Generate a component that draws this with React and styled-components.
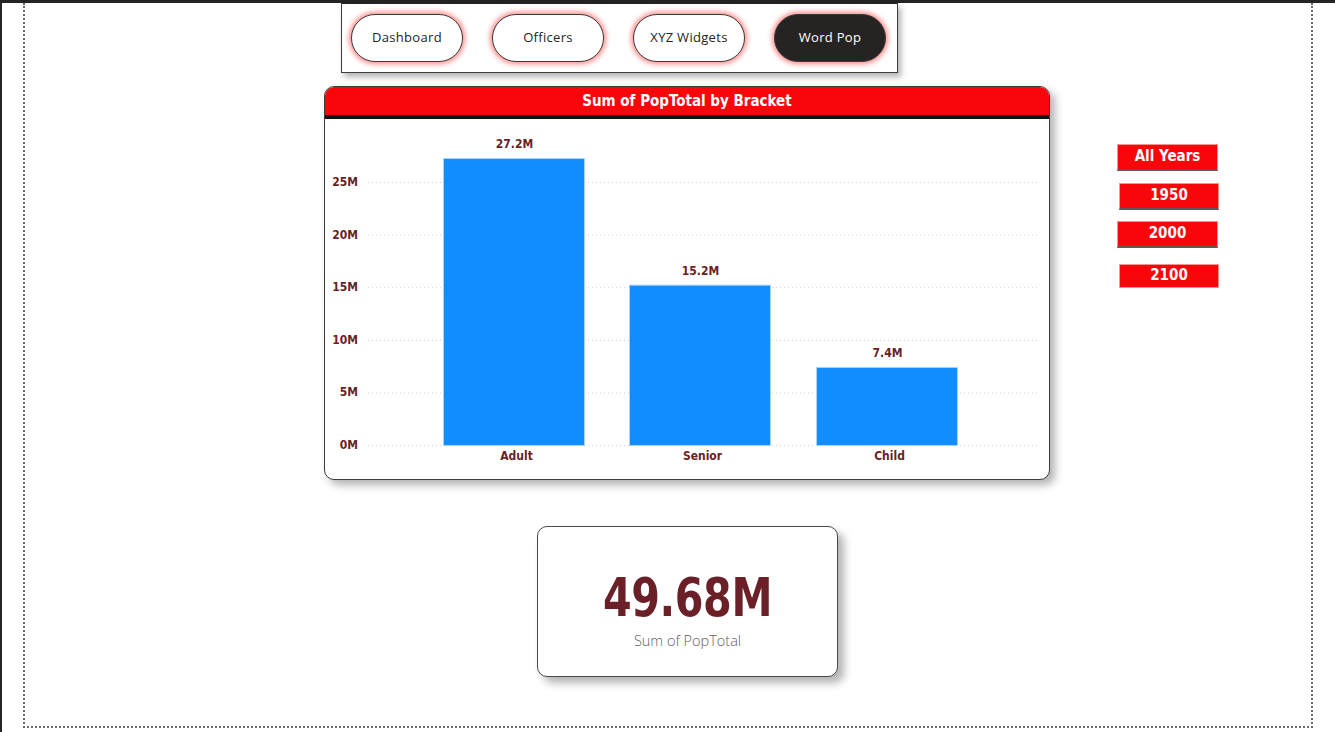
import React from "react";
import styled, { createGlobalStyle } from "styled-components";

const GlobalStyle = createGlobalStyle`
  html, body {
    margin: 0;
    padding: 0;
    background: #ffffff;
    overflow: hidden;
  }
  * { box-sizing: border-box; }
`;

const DIN = `"DejaVu Sans Condensed", "DejaVu Sans", "Liberation Sans", sans-serif`;
const MAROON = "#6B1F27";
const RED = "#F8060A";

const Frame = styled.div`
  width: 1335px;
  height: 732px;
  border-top: 3px solid #252423;
  border-left: 2px solid #252423;
  background: #ffffff;
`;

const Canvas = styled.div`
  margin-left: 21px;
  width: 1290px;
  height: 725px;
  border-left: 2px dotted #6a6a6a;
  border-right: 2px dotted #6a6a6a;
  border-bottom: 2px dotted #6a6a6a;
  display: flex;
  flex-direction: column;
  align-items: flex-start;
`;

const Nav = styled.nav`
  margin-left: 316px;
  width: 557px;
  height: 70px;
  background: #ffffff;
  border: 1px solid #3c3c3c;
  border-top-color: #252423;
  box-shadow: 3px 4px 6px rgba(0, 0, 0, 0.3);
  display: flex;
  align-items: center;
  gap: 29px;
  padding: 0 0 1px 9px;
`;

const NavButton = styled.button`
  width: 112px;
  height: 48px;
  border-radius: 24px;
  border: 1px solid #3a3a3a;
  background: ${(p) => (p.$active ? "#252423" : "#ffffff")};
  color: ${(p) => (p.$active ? "#ffffff" : "#252423")};
  font-family: "Open Sans", "Liberation Sans", sans-serif;
  font-size: 13px;
  letter-spacing: 0.3px;
  box-shadow: 0 0 5px 2px rgba(255, 20, 20, 0.5);
  padding: 0 0 1px 0;
  cursor: pointer;
`;

const ChartRow = styled.div`
  margin-top: 13px;
  margin-left: 299px;
  display: flex;
  align-items: flex-start;
`;

const ChartCard = styled.section`
  width: 726px;
  height: 394px;
  border: 1px solid #3c3c3c;
  border-radius: 10px;
  background: #ffffff;
  box-shadow: 5px 5px 8px rgba(0, 0, 0, 0.3);
  overflow: hidden;
  display: flex;
  flex-direction: column;
`;

const ChartHeader = styled.header`
  height: 32px;
  background: ${RED};
  border-bottom: 4px solid #111111;
  color: #ffffff;
  font-family: ${DIN};
  font-weight: 700;
  font-size: 15px;
  display: flex;
  align-items: center;
  justify-content: center;
  padding-bottom: 1px;
`;

const ChartBody = styled.svg`
  display: block;
  width: 724px;
  height: 360px;
`;

const Slicers = styled.div`
  margin-left: 67px;
  padding-top: 58px;
  display: flex;
  flex-direction: column;
  align-items: flex-start;
`;

const SlicerItem = styled.button`
  margin-top: ${(p) => p.$top}px;
  margin-left: ${(p) => p.$shift}px;
  width: ${(p) => p.$w}px;
  height: ${(p) => p.$h}px;
  background: ${RED};
  border: 1px solid #ff8f95;
  border-bottom: ${(p) => (p.$line ? "2px solid #5a5a5a" : "1px solid #ff8f95")};
  color: #ffffff;
  font-family: ${DIN};
  font-weight: 700;
  font-size: 15px;
  padding: 0 0 2px 0;
  display: flex;
  align-items: center;
  justify-content: center;
  cursor: pointer;
`;

const KpiCard = styled.section`
  margin-top: 46px;
  margin-left: 512px;
  width: 301px;
  height: 151px;
  border: 1px solid #4a4a4a;
  border-radius: 10px;
  background: #ffffff;
  box-shadow: 6px 6px 8px rgba(0, 0, 0, 0.3);
  display: flex;
  flex-direction: column;
  align-items: center;
  padding-top: 43px;
`;

const KpiValue = styled.div`
  font-family: ${DIN};
  font-weight: 700;
  font-size: 54px;
  line-height: 56px;
  letter-spacing: -0.5px;
  color: ${MAROON};
  transform: scaleX(0.85);
`;

const KpiLabel = styled.div`
  margin-top: 5px;
  font-family: "Open Sans", "Liberation Sans", sans-serif;
  font-weight: 300;
  font-size: 14.5px;
  color: #605e5c;
`;

const ticks = [0, 5, 10, 15, 20, 25];
const bars = [
  { label: "Adult", value: 27.2, x: 118 },
  { label: "Senior", value: 15.2, x: 304 },
  { label: "Child", value: 7.4, x: 491 },
];
const ZERO = 326;
const PX_PER_M = 10.55;
const BAR_W = 141;

const labelStyle = {
  fontFamily: `"DejaVu Sans Condensed", "DejaVu Sans", sans-serif`,
  fontWeight: 700,
  fontSize: 12,
};

function BarChart() {
  return (
    <ChartBody viewBox="0 0 724 360">
      {ticks.map((t) => {
        const y = ZERO - t * 10.52;
        return (
          <g key={t}>
            <line
              x1={43}
              x2={713}
              y1={y + 0.5}
              y2={y + 0.5}
              stroke="#cfcfcf"
              strokeWidth="1"
              strokeDasharray="1 3"
            />
            <text x={33} y={y + 4} textAnchor="end" fill={MAROON} style={labelStyle}>
              {t}M
            </text>
          </g>
        );
      })}
      {bars.map((b) => {
        const h = b.value * PX_PER_M;
        const top = ZERO - h;
        return (
          <g key={b.label}>
            <rect
              x={b.x + 0.5}
              y={top + 0.5}
              width={BAR_W}
              height={h}
              fill="#118DFF"
              stroke="#a9d4ff"
              strokeWidth="1"
            />
            <text
              x={b.x + BAR_W / 2 + 1}
              y={top - 10}
              textAnchor="middle"
              fill={MAROON}
              style={labelStyle}
            >
              {b.value}M
            </text>
            <text
              x={b.x + BAR_W / 2 + 3}
              y={341}
              textAnchor="middle"
              fill={MAROON}
              style={labelStyle}
            >
              {b.label}
            </text>
          </g>
        );
      })}
    </ChartBody>
  );
}

const navItems = ["Dashboard", "Officers", "XYZ Widgets", "Word Pop"];
const slicerItems = [
  { label: "All Years", top: 0, shift: 0, w: 101, h: 27, line: true },
  { label: "1950", top: 12, shift: 2, w: 100, h: 27, line: true },
  { label: "2000", top: 11, shift: 0, w: 101, h: 27, line: true },
  { label: "2100", top: 16, shift: 2, w: 100, h: 24, line: false },
];

export default function App() {
  return (
    <>
      <GlobalStyle />
      <Frame>
        <Canvas>
          <Nav>
            {navItems.map((n) => (
              <NavButton key={n} $active={n === "Word Pop"}>
                {n}
              </NavButton>
            ))}
          </Nav>
          <ChartRow>
            <ChartCard>
              <ChartHeader>Sum of PopTotal by Bracket</ChartHeader>
              <BarChart />
            </ChartCard>
            <Slicers>
              {slicerItems.map((s) => (
                <SlicerItem
                  key={s.label}
                  $top={s.top}
                  $shift={s.shift}
                  $w={s.w}
                  $h={s.h}
                  $line={s.line}
                >
                  {s.label}
                </SlicerItem>
              ))}
            </Slicers>
          </ChartRow>
          <KpiCard>
            <KpiValue>49.68M</KpiValue>
            <KpiLabel>Sum of PopTotal</KpiLabel>
          </KpiCard>
        </Canvas>
      </Frame>
    </>
  );
}
